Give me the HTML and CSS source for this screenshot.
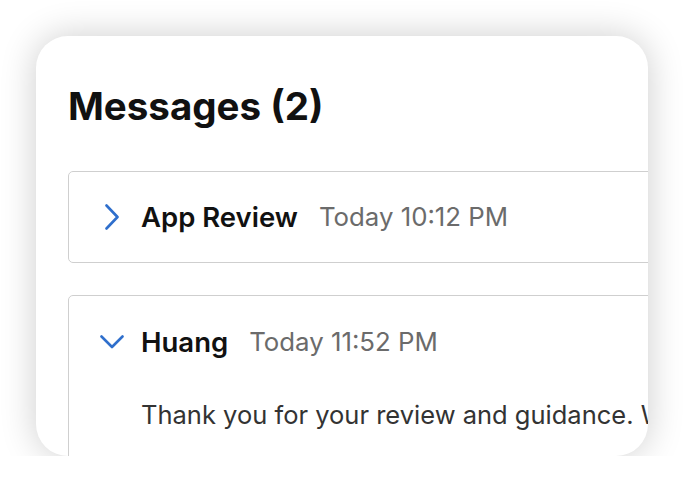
FILE: index.html
```html
<!DOCTYPE html>
<html lang="en">
<head>
  <meta charset="UTF-8">
  <meta name="viewport" content="width=device-width, initial-scale=1.0">
  <title>Messages</title>
  <link rel="stylesheet" href="styles.css">
</head>
<body>
  <div class="card">
    <h1>Messages (2)</h1>

    <!-- Mensaje plegado -->
    <div class="message">
      <div class="message-head">
        <span class="toggle">
          <svg width="14" height="26" viewBox="0 0 14 26">
            <path d="M1.5 1.5 L12.5 13 L1.5 24.5" fill="none" stroke="#2f6fcc" stroke-width="2.6" stroke-linecap="round" stroke-linejoin="round"/>
          </svg>
        </span>
        <span class="sender">App Review</span>
        <span class="time">Today 10:12 PM</span>
      </div>
    </div>

    <!-- Mensaje abierto -->
    <div class="message open">
      <div class="message-head">
        <span class="toggle">
          <svg width="24" height="14" viewBox="0 0 24 14">
            <path d="M1.5 1.5 L12 12 L22.5 1.5" fill="none" stroke="#2f6fcc" stroke-width="2.6" stroke-linecap="round" stroke-linejoin="round"/>
          </svg>
        </span>
        <span class="sender">Huang</span>
        <span class="time">Today 11:52 PM</span>
      </div>
      <p class="body">Thank you for your review and guidance. We have updated the app accordingly.</p>
    </div>
  </div>
</body>
</html>
```

FILE: styles.css
```css
body {
  margin: 0;
  background: #fff;
  font-family: Inter, "Noto Sans", sans-serif;
}
.card {
  margin: 36px 0 0 36px;
  width: 612px;
  height: 420px;
  background: #fff;
  border-radius: 32px;
  box-shadow: 0 0 36px rgba(0, 0, 0, 0.2);
  overflow: hidden;
  padding: 0 0 0 32px;
  box-sizing: border-box;
}
h1 {
  margin: 0;
  padding-top: 48px;
  font-size: 38.5px;
  line-height: 44px;
  font-weight: 700;
  color: #111;
}
.message {
  width: 640px;
  margin-top: 43px;
  border: 1.5px solid #cfcfcf;
  border-radius: 5px;
  height: 92px;
  box-sizing: border-box;
}
.message.open {
  margin-top: 32px;
  height: 200px;
}
.message-head {
  display: flex;
  align-items: center;
  height: 89px;
  padding-left: 31px;
}
.message.open .message-head {
  height: 91px;
}
.toggle {
  flex: none;
  width: 24px;
  margin-right: 17px;
  display: flex;
  justify-content: center;
}
.toggle svg {
  display: block;
}
.sender {
  font-size: 27.5px;
  font-weight: 600;
  color: #111;
  margin-right: 21px;
}
.time {
  font-size: 25.8px;
  color: #6b6b6b;
}
.body {
  margin: 13px 0 0 72px;
  font-size: 25.5px;
  line-height: 30px;
  color: #333;
  white-space: nowrap;
}
```
